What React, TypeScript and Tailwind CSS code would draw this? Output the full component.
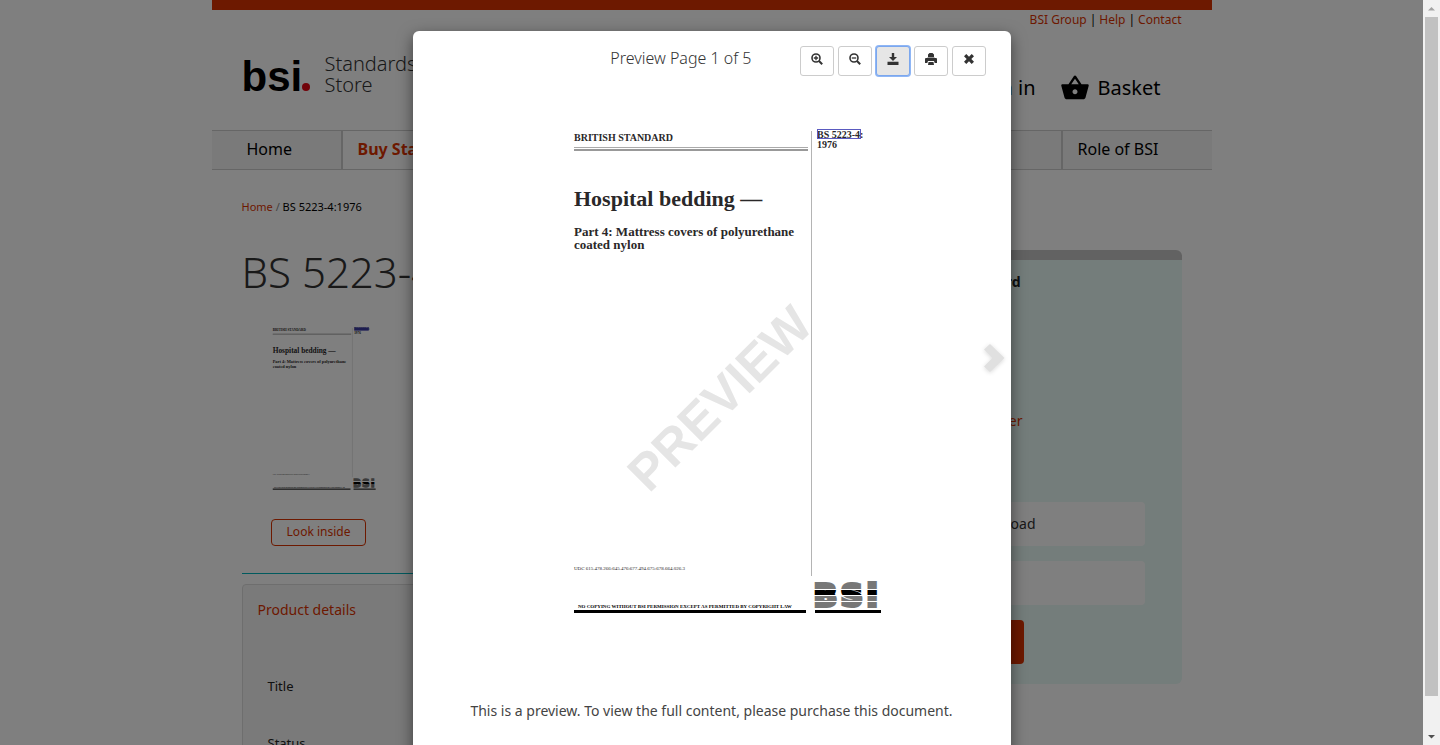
import React from "react";
import { MdShoppingBasket } from "react-icons/md";

function CoverPage({ className, watermark }: { className: string; watermark?: boolean }) {
  return (
    <svg
      viewBox="0 0 340 500"
      className={className}
      role="img"
      aria-label="Cover of BS 5223-4:1976"
      fontFamily="'Liberation Serif', serif"
      fontWeight="bold"
      fill="#2a2829"
    >
      <defs>
        <linearGradient id="bands" gradientUnits="userSpaceOnUse" x1="0" y1="461" x2="0" y2="486">
          <stop offset="0.22" stopColor="#777" />
          <stop offset="0.22" stopColor="#fff" />
          <stop offset="0.26" stopColor="#fff" />
          <stop offset="0.26" stopColor="#000" />
          <stop offset="0.48" stopColor="#000" />
          <stop offset="0.48" stopColor="#fff" />
          <stop offset="0.53" stopColor="#fff" />
          <stop offset="0.53" stopColor="#777" />
          <stop offset="0.72" stopColor="#777" />
          <stop offset="0.72" stopColor="#fff" />
          <stop offset="0.76" stopColor="#fff" />
          <stop offset="0.76" stopColor="#777" />
        </linearGradient>
      </defs>
      {watermark && (
        <text
          x="107"
          y="372"
          transform="rotate(-45 107 372)"
          fontFamily="'Liberation Sans', sans-serif"
          fontSize="51"
          fill="#e5e5e5"
        >
          PREVIEW
        </text>
      )}
      <text x="32" y="19" fontSize="10">BRITISH STANDARD</text>
      <path d="M32 25.5H266" stroke="#aaa" strokeWidth="1" />
      <path d="M32 28H266" stroke="#999" strokeWidth="2" />
      <path d="M269.500 9V454" stroke="#b4b4b4" strokeWidth="1" />
      <text x="275" y="16" fontSize="10">BS 5223-4:</text>
      <text x="275" y="26" fontSize="10">1976</text>
      <rect
        x="275.5"
        y="7.5"
        width="43"
        height="9"
        fill={watermark ? "none" : "#3a3aa0"}
        stroke="#5a5ac0"
        strokeWidth="1"
      />
      <text x="32" y="84" fontSize="22">Hospital bedding —</text>
      <text x="32" y="114" fontSize="13">Part 4: Mattress covers of polyurethane</text>
      <text x="32" y="127" fontSize="13">coated nylon</text>
      <text x="32" y="448" fontSize="5" fontWeight="normal">
        UDC 615.478.266:645.476:677.494.675:678.664.026.3
      </text>
      <text x="36" y="486" fontSize="5" fill="#000">
        NO COPYING WITHOUT BSI PERMISSION EXCEPT AS PERMITTED BY COPYRIGHT LAW
      </text>
      <rect x="32" y="488" width="232" height="3" fill="#000" />
      <text
        x="272 299 325"
        y="484"
        fontFamily="'DejaVu Sans', sans-serif"
        fontSize="30"
        fontWeight="bold"
        fill="url(#bands)"
        stroke="url(#bands)"
        strokeWidth="4"
      >
        BSi
      </text>
      <rect x="273" y="488" width="66" height="3" fill="#000" />
    </svg>
  );
}

const glyph = "size-3 fill-[#333]";

function ZoomGlyph({ plus }: { plus?: boolean }) {
  return (
    <svg viewBox="0 0 12 12" className={glyph} aria-hidden="true">
      <circle cx="5" cy="5" r="4" fill="none" stroke="#333" strokeWidth="1.6" />
      <path d="M8 8L11.200 11.200" stroke="#333" strokeWidth="2" />
      <path d={plus ? "M2.800 5H7.200M5 2.800V7.200" : "M2.800 5H7.200"} stroke="#333" strokeWidth="1.300" />
    </svg>
  );
}

function DownloadGlyph() {
  return (
    <svg viewBox="0 0 12 12" className={glyph} aria-hidden="true">
      <path d="M4.800 0H7.200V4H10L6 8L2 4H4.800ZM.5 8.700H11.500V12H.5Z" />
    </svg>
  );
}

function PrintGlyph() {
  return (
    <svg viewBox="0 0 12 12" className={glyph} aria-hidden="true">
      <path d="M3 4V1.500L4.500 0H7.500L9 1.500V4ZM.5 5H2L3 4.600H9L10 5H11.500L12 6V10H9.700L9 8H3L2.300 10H0V6ZM3.500 9H8.500L9 12H3Z" />
    </svg>
  );
}

function CloseGlyph() {
  return (
    <svg viewBox="0 0 12 12" className={glyph} aria-hidden="true">
      <path d="M3.300 1L6 3.700L8.700 1L11 3.300L8.300 6L11 8.700L8.700 11L6 8.300L3.300 11L1 8.700L3.700 6L1 3.300Z" />
    </svg>
  );
}

const tool = "flex h-[30px] w-[34px] items-center justify-center rounded-[3px] border pb-1";

const tools = [
  { label: "Zoom in", icon: <ZoomGlyph plus /> },
  { label: "Zoom out", icon: <ZoomGlyph /> },
  { label: "Download", icon: <DownloadGlyph />, focused: true },
  { label: "Print", icon: <PrintGlyph /> },
  { label: "Close", icon: <CloseGlyph /> },
];

function PreviewDialog() {
  return (
    <section
      role="dialog"
      aria-label="Preview"
      className="relative flex min-h-[760px] w-[598px] flex-col items-center rounded-md bg-white text-[#333] shadow-[0_5px_15px_rgba(0,0,0,0.5)]"
    >
      <header className="flex w-full items-center justify-end gap-12 pt-[15px] pr-[25px]">
        <h2 className="pb-[6px] text-base font-light">Preview Page 1 of 5</h2>
        <div className="flex gap-1">
          {tools.map((t) => (
            <button
              key={t.label}
              type="button"
              aria-label={t.label}
              className={
                t.focused
                  ? `${tool} border-[#7ba7ee] bg-[#e6e6e6] ring-1 ring-[#8fb6f5]`
                  : `${tool} border-[#ccc] bg-white`
              }
            >
              {t.icon}
            </button>
          ))}
        </div>
      </header>
      <CoverPage className="mt-[46px] w-[340px]" watermark />
      <button type="button" aria-label="Next page" className="absolute top-[312px] right-[6px]">
        <svg viewBox="0 0 22 30" className="h-[30px] w-[22px] drop-shadow-sm" aria-hidden="true">
          <path d="M7 1L21.500 15L7 29L1 23.500L9.500 15L1 6.500Z" fill="#e0e0e0" />
        </svg>
      </button>
      <p className="mt-[79px] text-sm leading-5 text-[#444]">
        This is a preview. To view the full content, please purchase this document.
      </p>
    </section>
  );
}

function SiteHeader() {
  return (
    <header>
      <div className="h-[10px] bg-[#db3300]" />
      <div className="flex h-[120px] justify-between px-[30px]">
        <a href="#home" className="mt-[42px] flex h-[43px] items-end">
          <span className="flex w-[83px] items-baseline text-[42px] leading-9 font-bold text-black [font-family:'Liberation_Sans',sans-serif]">
            bsi
            <span className="size-2 rounded-full bg-[#e30613]" />
          </span>
          <span className="flex flex-col text-xl leading-[21px] font-light text-[#333]">
            <span>Standards</span>
            <span>Store</span>
          </span>
        </a>
        <div className="flex flex-col items-end">
          <nav className="flex gap-[3px] text-xs leading-5 text-black">
            <a href="#group" className="text-[#db3300]">BSI Group</a>|
            <a href="#help" className="text-[#db3300]">Help</a>|
            <a href="#contact" className="text-[#db3300]">Contact</a>
          </nav>
          <div className="mt-[43px] mr-[21px] flex items-center gap-2 text-xl leading-7 text-black">
            <a href="#signin" className="mr-4">Sign in</a>
            <MdShoppingBasket className="size-[30px]" />
            <a href="#basket">Basket</a>
          </div>
        </div>
      </div>
      <nav className="flex h-10 border-y border-[#ccc] bg-[#f4f4f4] text-base leading-9 text-black">
        <a href="#home" className="w-[129px] pl-[35px]">Home</a>
        <a href="#buy" className="w-[240px] border-l-2 border-[#ccc] bg-white pl-[15px] font-bold text-[#db3300]">
          Buy Standards
        </a>
        <span className="grow" />
        <a href="#role" className="w-[151px] border-l-2 border-[#ccc] pl-[15px]">Role of BSI</a>
      </nav>
    </header>
  );
}

function PurchasePanel() {
  const field = "flex h-11 items-center justify-end rounded-sm bg-white pr-[109px] text-sm text-[#333]";
  return (
    <aside className="mt-[50px] flex h-[434px] w-[300px] flex-col self-start rounded-md border-t-[10px] border-[#c4c4c4] bg-[#e8faf7] pr-[37px] pl-6">
      <h2 className="mt-3 pr-[124px] text-right text-sm leading-5 font-bold text-[#222]">Standard</h2>
      <a href="#member" className="mt-[119px] pr-[122px] text-right text-sm leading-5 text-[#db3300]">
        member
      </a>
      <div className="mt-[71px] flex flex-col gap-[15px]">
        <div className={field}>download</div>
        <div className={field} />
        <button type="button" aria-label="Add to basket" className="h-11 w-[118px] rounded-sm bg-[#db3300]" />
      </div>
    </aside>
  );
}

function StorePage() {
  return (
    <div className="mx-auto max-w-[1000px]">
      <SiteHeader />
      <main className="flex gap-6 px-[30px]">
        <div className="min-w-0 grow pt-[29px]">
          <p className="text-[11px] leading-4 text-black">
            <a href="#home" className="text-[#db3300]">Home</a>
            <span className="text-[#888]"> / </span>BS 5223-4:1976
          </p>
          <h1 className="mt-[33px] text-[42px] leading-[48px] font-light text-[#333]">BS 5223-4:1976</h1>
          <div className="mt-[29px] flex w-[154px] flex-col items-center">
            <CoverPage className="w-[114px]" />
            <button
              type="button"
              className="mt-[26px] h-[27px] rounded-[4px] border border-[#db3300] px-[15px] text-xs text-[#db3300]"
            >
              Look inside
            </button>
          </div>
          <hr className="mt-[27px] border-[#00b5bd]" />
          <section className="mt-[10px] rounded-[4px] border border-[#ddd] bg-[#f5f5f5] px-[15px] pt-[15px] pb-10">
            <h2 className="text-sm leading-5 text-[#db3300]">Product details</h2>
            <dl className="mt-[56px] flex flex-col gap-[37px] pl-[10px] text-[13px] leading-5 text-[#222]">
              <dt>Title</dt>
              <dt>Status</dt>
            </dl>
          </section>
        </div>
        <div className="pt-[30px]">
          <PurchasePanel />
        </div>
      </main>
    </div>
  );
}

function ScrollTrack() {
  return (
    <div className="flex w-[17px] shrink-0 flex-col items-center justify-between bg-[#f1f1f1]" aria-hidden="true">
      <svg viewBox="0 0 17 17" className="size-[17px]">
        <path d="M5 10.500L8.500 7L12 10.500Z" fill="#a3a3a3" />
      </svg>
      <div className="mb-8 w-[13px] grow bg-[#c1c1c1]" />
      <svg viewBox="0 0 17 17" className="size-[17px]">
        <path d="M5 7L8.500 10.500L12 7Z" fill="#505050" />
      </svg>
    </div>
  );
}

export default function App() {
  return (
    <div className="flex h-screen overflow-hidden bg-white font-['Noto_Sans',sans-serif]">
      <div className="relative grow overflow-hidden">
        <StorePage />
        <div className="absolute inset-0 flex items-start justify-center overflow-hidden bg-black/50 pt-[31px]">
          <PreviewDialog />
        </div>
      </div>
      <ScrollTrack />
    </div>
  );
}
